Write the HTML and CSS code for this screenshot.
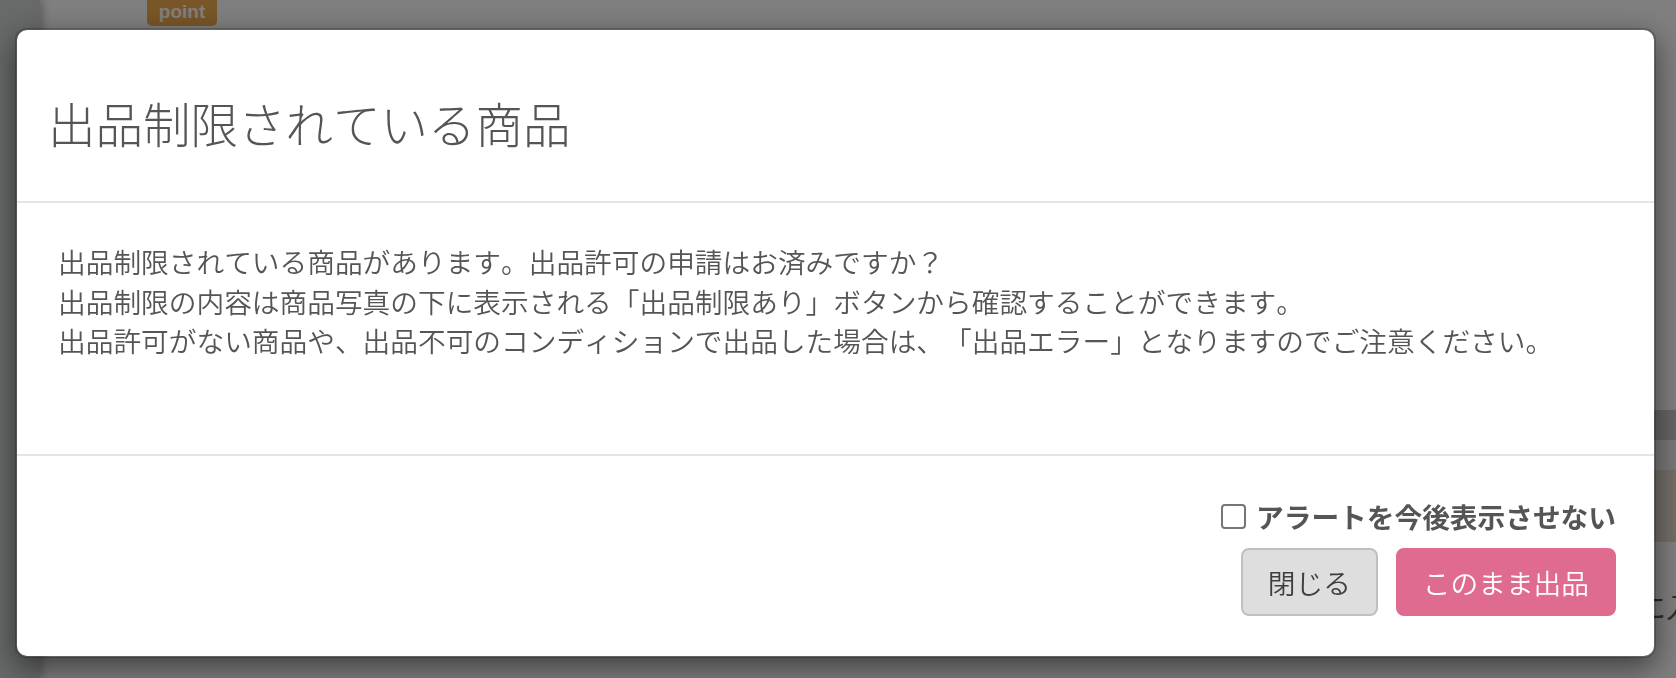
FILE: index.html
```html
<!DOCTYPE html>
<html lang="ja">
<head>
<meta charset="utf-8">
<title>出品制限されている商品</title>
<link rel="stylesheet" href="styles.css">
</head>
<body>
<div class="page">
  <aside class="sidebar"></aside>
  <main class="main">
    <div class="topbar"><span class="badge">point</span></div>
    <div class="spacer"></div>
    <div class="band band-dark"></div>
    <div class="band band-light"></div>
    <div class="band band-brown"></div>
    <p class="hint">ここに入力してください</p>
  </main>
</div>

<div class="overlay">
  <div class="modal">
    <div class="modal-header">
      <h4 class="modal-title">出品制限されている商品</h4>
    </div>
    <div class="modal-body">
      <p>出品制限されている商品があります。出品許可の申請はお済みですか？<br>出品制限の内容は商品写真の下に表示される「出品制限あり」ボタンから確認することができます。<br>出品許可がない商品や、出品不可のコンディションで出品した場合は、「出品エラー」となりますのでご注意ください。</p>
    </div>
    <div class="modal-footer">
      <label class="check"><input type="checkbox" class="check-box"><span>アラートを今後表示させない</span></label>
      <div class="buttons">
        <button class="btn btn-default">閉じる</button>
        <button class="btn btn-primary">このまま出品</button>
      </div>
    </div>
  </div>
</div>
</body>
</html>
```

FILE: styles.css
```css
html, body {
  margin: 0;
  padding: 0;
  height: 100%;
  overflow: hidden;
}
body {
  font-family: "Noto Sans CJK JP", "Noto Sans", sans-serif;
  color: #555;
  background: #fff;
  text-spacing-trim: space-all;
  font-kerning: none;
  font-feature-settings: "kern" 0, "palt" 0, "halt" 0, "chws" 0;
}
.page {
  display: flex;
  height: 678px;
}
.sidebar {
  width: 40px;
  flex: none;
  background: #d0d2d2;
  box-shadow: 3px 0 8px rgba(0,0,0,0.25);
  position: relative;
  z-index: 1;
}
.main {
  flex: 1;
  display: flex;
  flex-direction: column;
  overflow: hidden;
  background: #fff;
}
.topbar {
  height: 26px;
  padding-left: 107px;
  display: flex;
  align-items: flex-end;
}
.badge {
  display: block;
  width: 70px;
  height: 26px;
  background: #f0ad4e;
  border-radius: 0 0 5px 5px;
  color: #fff;
  font-family: "Liberation Sans", Arial, sans-serif;
  font-weight: bold;
  font-size: 19px;
  line-height: 24px;
  text-align: center;
  box-sizing: border-box;
}
.spacer {
  height: 384px;
}
.band { flex: none; }
.band-dark { height: 30px; background: #cccccc; }
.band-light { height: 30px; background: #f2f2f2; }
.band-brown { height: 72px; background: #e7ddd1; }
.hint {
  margin: 44px 0 0 1542px;
  font-size: 28px;
  line-height: 40px;
  color: #5a5a5a;
  white-space: nowrap;
}

.overlay {
  position: fixed;
  inset: 0;
  background: rgba(0,0,0,0.5);
  padding: 28px 20px 0 15px;
  z-index: 10;
}
.modal {
  background: #fff;
  border: 2px solid rgba(0,0,0,0.2);
  border-radius: 12px;
  box-shadow: 0 10px 30px rgba(0,0,0,0.5);
  background-clip: padding-box;
}
.modal-header {
  padding: 59px 31px 44px;
  border-bottom: 2px solid #e5e5e5;
}
.modal-title {
  margin: 0;
  font-size: 47.5px;
  line-height: 68px;
  font-weight: 300;
  color: #555;
}
.modal-body {
  padding: 39px 41px 93px;
  border-bottom: 2px solid #e5e5e5;
}
.modal-body p {
  margin: 0;
  font-size: 27.7px;
  line-height: 39.6px;
  font-weight: 350;
  color: #555;
}
.modal-footer {
  padding: 41px 38px 40px;
  display: flex;
  flex-direction: column;
  align-items: flex-end;
  gap: 12px;
}
.check {
  display: flex;
  align-items: center;
  gap: 10px;
  font-size: 27.7px;
  line-height: 39.6px;
  font-weight: 700;
  color: #555;
}
.check-box {
  appearance: none;
  -webkit-appearance: none;
  width: 25px;
  height: 25px;
  margin: 0;
  border: 2px solid #767676;
  border-radius: 4px;
  background: #fff;
  box-sizing: border-box;
}
.buttons {
  display: flex;
  gap: 18px;
}
.btn {
  font-family: "Noto Sans CJK JP", "Noto Sans", sans-serif;
  font-size: 27.7px;
  line-height: 40px;
  padding: 12px 25px;
  border: 2px solid transparent;
  border-radius: 8px;
  font-weight: 350;
}
.btn-default {
  background: #dedede;
  border-color: #bfbfbf;
  color: #3f3f3f;
}
.btn-primary {
  background: #df6b8f;
  border-color: #df6b8f;
  color: #fff;
}
```
